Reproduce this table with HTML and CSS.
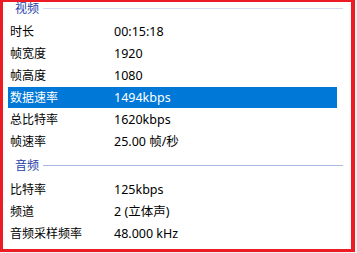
FILE: index.html
```html
<!DOCTYPE html>
<html>
  <head>
    <meta charset="UTF-8" />
    <title>媒体信息</title>
    <link rel="stylesheet" href="styles.css">
  </head>
  <body>
    <div class="frame">
      <div class="group-head">
        <span class="group-title">视频</span>
        <span class="group-line"></span>
      </div>
      <div class="prop"><span class="name">时长</span><span class="value">00:15:18</span></div>
      <div class="prop"><span class="name">帧宽度</span><span class="value">1920</span></div>
      <div class="prop"><span class="name">帧高度</span><span class="value">1080</span></div>
      <div class="prop selected"><span class="name">数据速率</span><span class="value">1494kbps</span></div>
      <div class="prop"><span class="name">总比特率</span><span class="value">1620kbps</span></div>
      <div class="prop"><span class="name">帧速率</span><span class="value">25.00 帧/秒</span></div>

      <div class="group-head audio">
        <span class="group-title">音频</span>
        <span class="group-line"></span>
      </div>
      <div class="prop"><span class="name">比特率</span><span class="value">125kbps</span></div>
      <div class="prop"><span class="name">频道</span><span class="value">2 (立体声)</span></div>
      <div class="prop"><span class="name">音频采样频率</span><span class="value">48.000 kHz</span></div>
    </div>
  </body>
</html>
```

FILE: styles.css
```css
body {
  margin: 0;
  background-color: #f0f0f0;
  font-family: "Noto Sans", "Noto Sans CJK SC", sans-serif;
  font-size: 12px;
  color: #000;
}
.frame {
  width: 355px;
  height: 252px;
  box-sizing: border-box;
  background-color: #fff;
  border-style: solid;
  border-color: #ed1c24;
  border-width: 2px 4px 3px 3px;
}
.group-head {
  display: flex;
  align-items: center;
  height: 13px;
  margin: 0 8px 6px 12px;
}
.group-head.audio {
  margin-top: 6px;
  margin-bottom: 7px;
}
.group-title {
  color: #1e3ea8;
  line-height: 13px;
  margin-right: 4px;
}
.group-line {
  flex: 1;
  height: 1px;
  background-color: #d5dcef;
}
.audio .group-line {
  background-color: #aabce6;
}
.prop {
  display: flex;
  height: 22px;
  line-height: 22px;
  width: 329px;
  margin-left: 5px;
  padding-left: 2px;
  box-sizing: border-box;
  white-space: nowrap;
}
.prop .name {
  width: 104px;
}
.prop .value {
  font-size: 12.5px;
}
.prop.selected {
  height: 21px;
  line-height: 21px;
  margin-bottom: 1px;
  background-color: #0078d7;
  color: #fff;
}
```
